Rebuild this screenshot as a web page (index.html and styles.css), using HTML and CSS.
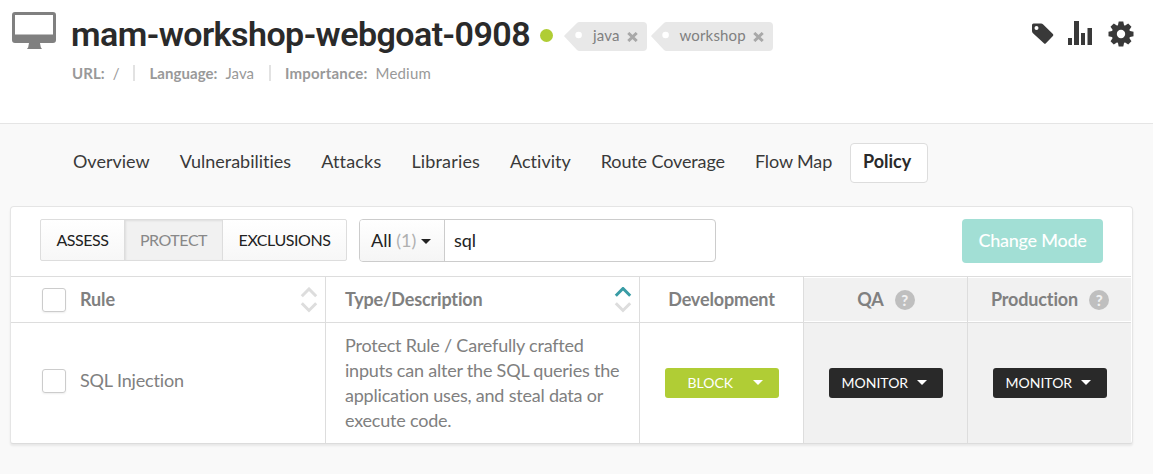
FILE: index.html
```html
<!DOCTYPE html>
<html lang="en">
<head>
<meta charset="utf-8">
<title>mam-workshop-webgoat-0908</title>
<link rel="stylesheet" href="styles.css">
</head>
<body>
<header class="header">
  <svg class="monitor" width="44" height="38" viewBox="0 0 44 38"><path fill="#808080" fill-rule="evenodd" d="M3 0h38a3 3 0 0 1 3 3v25a3 3 0 0 1-3 3H28l.8 4.200L30 37H15l1.200-1.800L17 31H3a3 3 0 0 1-3-3V3a3 3 0 0 1 3-3zM3 3v19.500h38V3z"/></svg>
  <div class="heading">
    <div class="title-row">
      <h1 class="title">mam-workshop-webgoat-0908</h1>
      <span class="status"></span>
      <span class="tag tag-java"><svg class="tag-tip" width="18" height="29" viewBox="0 0 18 29"><path fill="#e8e8e8" fill-rule="evenodd" d="M18 0h-2.500Q14 0 13 1L.6 13.200q-.8.800 0 1.600L13 28q1 1 2.500 1H18zM14.600 9.700a3.300 3.300 0 1 1 0 6.600 3.300 3.300 0 0 1 0-6.600z"/></svg><span class="tag-body">java<svg class="close" width="11" height="10" viewBox="0 0 11 10"><path d="M1.300 1l8.400 8M9.700 1L1.300 9"/></svg></span></span>
      <span class="tag"><svg class="tag-tip" width="18" height="29" viewBox="0 0 18 29"><path fill="#e8e8e8" fill-rule="evenodd" d="M18 0h-2.500Q14 0 13 1L.6 13.200q-.8.800 0 1.600L13 28q1 1 2.500 1H18zM14.600 9.700a3.300 3.300 0 1 1 0 6.600 3.300 3.300 0 0 1 0-6.600z"/></svg><span class="tag-body">workshop<svg class="close" width="11" height="10" viewBox="0 0 11 10"><path d="M1.300 1l8.400 8M9.700 1L1.300 9"/></svg></span></span>
    </div>
    <div class="meta">
      <span class="meta-item"><b>URL:</b>/</span>
      <span class="meta-item"><b>Language:</b>Java</span>
      <span class="meta-item"><b>Importance:</b>Medium</span>
    </div>
  </div>
  <div class="actions">
    <svg width="22" height="22" viewBox="0 0 22 22"><path fill="#393939" fill-rule="evenodd" d="M0 2Q0 .5 1.500.5H9q1.300 0 2.200.9l9.700 9.700q1 1 0 2l-7 7.100q-1 1-2 0L1 10.300Q0 9.300 0 8zM4.500 3a2 2 0 1 0 0 4 2 2 0 0 0 0-4z"/></svg>
    <svg width="24" height="24" viewBox="0 0 24 24"><path fill="#393939" d="M0 17h4v7H0zM6 0h5v24H6zM13 12h4v12h-4zM19.500 7H24v17h-4.500z"/></svg>
    <svg width="26" height="26" viewBox="-13 -13 26 26"><g fill="#393939"><path id="tooth" d="M-3.200-8-2.300-12.500H2.300L3.200-8V8L2.300 12.500H-2.300L-3.200 8z"/><use href="#tooth" transform="rotate(45)"/><use href="#tooth" transform="rotate(90)"/><use href="#tooth" transform="rotate(135)"/><circle r="9.300"/></g><circle r="4.200" fill="#fff"/></svg>
  </div>
</header>

<nav class="tabs">
  <a class="tab">Overview</a>
  <a class="tab">Vulnerabilities</a>
  <a class="tab loose">Attacks</a>
  <a class="tab loose">Libraries</a>
  <a class="tab">Activity</a>
  <a class="tab tight">Route Coverage</a>
  <a class="tab tight">Flow Map</a>
  <a class="tab active">Policy</a>
</nav>

<main class="panel">
  <div class="toolbar">
    <div class="segments">
      <span class="segment assess">ASSESS</span>
      <span class="segment protect">PROTECT</span>
      <span class="segment exclusions">EXCLUSIONS</span>
    </div>
    <div class="search">
      <span class="filter">All <span class="count">(1)</span><i class="caret"></i></span>
      <span class="query">sql</span>
    </div>
    <span class="change">Change Mode</span>
  </div>
  <div class="grid">
    <div class="cell head rule"><span class="check"></span><span class="grow">Rule</span><svg width="18" height="26" viewBox="0 0 18 26" class="sort"><path d="M1.800 9.200L9 2l7.200 7.200M1.800 16.300L9 23.500l7.200-7.200"/></svg></div>
    <div class="cell head desc"><span class="grow">Type/Description</span><svg width="18" height="26" viewBox="0 0 18 26" class="sort"><path class="on" d="M1.800 8.700L9 1.500l7.200 7.200"/><path d="M1.800 16.300L9 23.500l7.200-7.200"/></svg></div>
    <div class="cell head center">Development</div>
    <div class="cell head center gray">QA<span class="help">?</span></div>
    <div class="cell head center gray">Production<span class="help">?</span></div>
    <div class="cell body rule"><span class="check"></span><span class="name">SQL Injection</span></div>
    <div class="cell body desc"><span>Protect Rule / Carefully crafted<br>inputs can alter the SQL queries the<br>application uses, and steal data or<br>execute code.</span></div>
    <div class="cell body center"><span class="mode block">BLOCK<i class="caret"></i></span></div>
    <div class="cell body center gray"><span class="mode">MONITOR<i class="caret"></i></span></div>
    <div class="cell body center gray"><span class="mode">MONITOR<i class="caret"></i></span></div>
  </div>
</main>
</body>
</html>
```

FILE: styles.css
```css
* { box-sizing: border-box; }
body { margin: 0; height: 474px; overflow: hidden; background: #f9f9f9; font: 18px/25px Lato, sans-serif; font-variant-ligatures: none; color: #808080; }
svg { display: block; flex: none; }
.header { display: flex; height: 124px; background: #fff; border-bottom: 1px solid #e5e5e5; padding-left: 12px; }
.monitor { margin-top: 12px; }
.heading { padding: 14px 0 0 15px; }
.title-row { display: flex; height: 42px; align-items: center; }
.title { margin: 0; width: 460px; font: 600 34px/40px Roboto, sans-serif; letter-spacing: -.54px; padding-bottom: 2px; color: #2a2a2a; white-space: nowrap; }
.status { width: 13px; height: 13px; border-radius: 50%; background: #b0cd35; margin: 0 11px 0 9px; }
.tag { display: flex; height: 29px; margin-top: 3px; font-size: 15px; line-height: 27px; letter-spacing: .15px; }
.tag-java { margin-right: 4px; }
.tag-body { display: flex; background: #e8e8e8; border-radius: 0 4px 4px 0; padding: 0 8.500px 0 11px; }
.close { margin: 10px 0 0 7.500px; fill: none; stroke: #a8a8a8; stroke-width: 3; }
.meta { display: flex; margin: 7px 0 0 1px; font-size: 15px; line-height: 20px; letter-spacing: .05px; color: #999; }
.meta-item { display: flex; align-items: center; }
.meta-item b { margin-right: 8px; }
.meta-item + .meta-item::before { content: ""; width: 2px; height: 16px; background: #e2e2e2; margin: 0 14px; }
.meta-item:last-child { letter-spacing: .2px; }
.meta-item:last-child::before { margin-left: 15px; }
.actions { display: flex; gap: 16px; margin: 21px 19px 0 auto; }
.actions svg:first-child { margin: 2px -2px 0 0; }

.tabs { display: flex; padding: 19px 0 0 59px; gap: 2px; color: #393939; }
.tab { height: 40px; padding: 0 13px; border: 1px solid transparent; line-height: 34px; border-radius: 4px; white-space: nowrap; }
.loose { letter-spacing: .17px; }
.tight { letter-spacing: -.12px; }
.tab.active { width: 78px; margin-left: auto; margin-right: 225px; padding: 0 12px; background: #fff; border-color: #ddd; font-weight: bold; color: #2a2a2a; }

.panel { margin: 23px 0 0 10px; width: 1123px; height: 238px; border: 1px solid #e5e5e5; border-bottom-color: #dcdcdc; border-radius: 4px 4px 3px 3px; background: #fff; box-shadow: 0 2px 2px #e8e8e8; }
.toolbar { display: flex; height: 69px; padding: 12px 29px; }
.segments { display: flex; height: 42px; border: 1px solid #ddd; border-radius: 2px; font-size: 16px; line-height: 40px; letter-spacing: -.45px; color: #222; background: linear-gradient(#fff, #f7f7f7); }
.segment { text-align: center; }
.assess { width: 83px; }
.protect { width: 99px; background: #f1f1f1; color: #888; border: solid #ddd; border-width: 0 1px; box-shadow: inset 1px 1px 2px #ddd; }
.exclusions { width: 123px; }
.search { display: flex; margin-left: 12px; width: 357px; height: 43px; border: 1px solid #ccc; border-radius: 4px; color: #222; line-height: 41px; }
.filter { width: 85px; padding-left: 11px; border-right: 1px solid #ccc; border-radius: 3px 0 0 3px; background: linear-gradient(#fff, #f5f5f5); white-space: nowrap; }
.count { color: #b0b0b0; }
.caret { display: inline-block; border: solid transparent; border-width: 5px 5px 0; border-top-color: currentColor; vertical-align: 3px; margin-left: 5px; }
.query { padding-left: 9px; }
.change { margin-left: auto; width: 141px; height: 44px; border-radius: 4px; background: #a2dfd5; color: #fff; font-weight: 500; line-height: 43px; letter-spacing: -.25px; text-align: center; }

.grid { display: grid; grid-template: 46px 121px / 315px 314px 164px 164px 163px; width: 1120px; }
.cell { display: flex; align-items: center; border-top: 1px solid #ddd; border-right: 1px solid #ddd; min-width: 0; }
.cell:nth-child(5n) { border-right: 0; }
.head { font-weight: bold; letter-spacing: -.15px; }
.body { letter-spacing: -.21px; }
.body:not(.desc) { padding-bottom: 4px; }
.rule { padding-left: 31px; }
.check { width: 24px; height: 24px; flex: none; margin-right: 14px; border: 1px solid #ccc; border-radius: 3px; box-shadow: 0 1px 2px #eee; }
.name { padding-bottom: 2px; letter-spacing: -.15px; }
.grow { flex: 1; }
.sort { margin-right: 7px; fill: none; stroke: #ddd; stroke-width: 3; }
.on { stroke: #399ca5; }
.desc { padding-left: 19px; white-space: nowrap; }
.center { justify-content: center; }
.gray { background: #f1f1f1; }
.head.gray { padding-left: 1px; box-shadow: inset 0 1px #fff, inset 0 -1px #fff; }
.help { width: 20px; height: 20px; margin-left: 11px; border-radius: 50%; background: #bfbfbf; color: #f1f1f1; font-size: 15px; font-weight: 900; line-height: 20px; text-align: center; }
.mode { display: flex; align-items: center; width: 114px; height: 30px; margin-top: 4px; padding: 0 0 2px 13px; border-radius: 3px; background: #292929; color: #fff; font-size: 14px; letter-spacing: 0; }
.mode .caret { margin-left: 9px; }
.block { padding-left: 23px; background: #b0cd35; }
.block .caret { margin-left: 20px; }
```
